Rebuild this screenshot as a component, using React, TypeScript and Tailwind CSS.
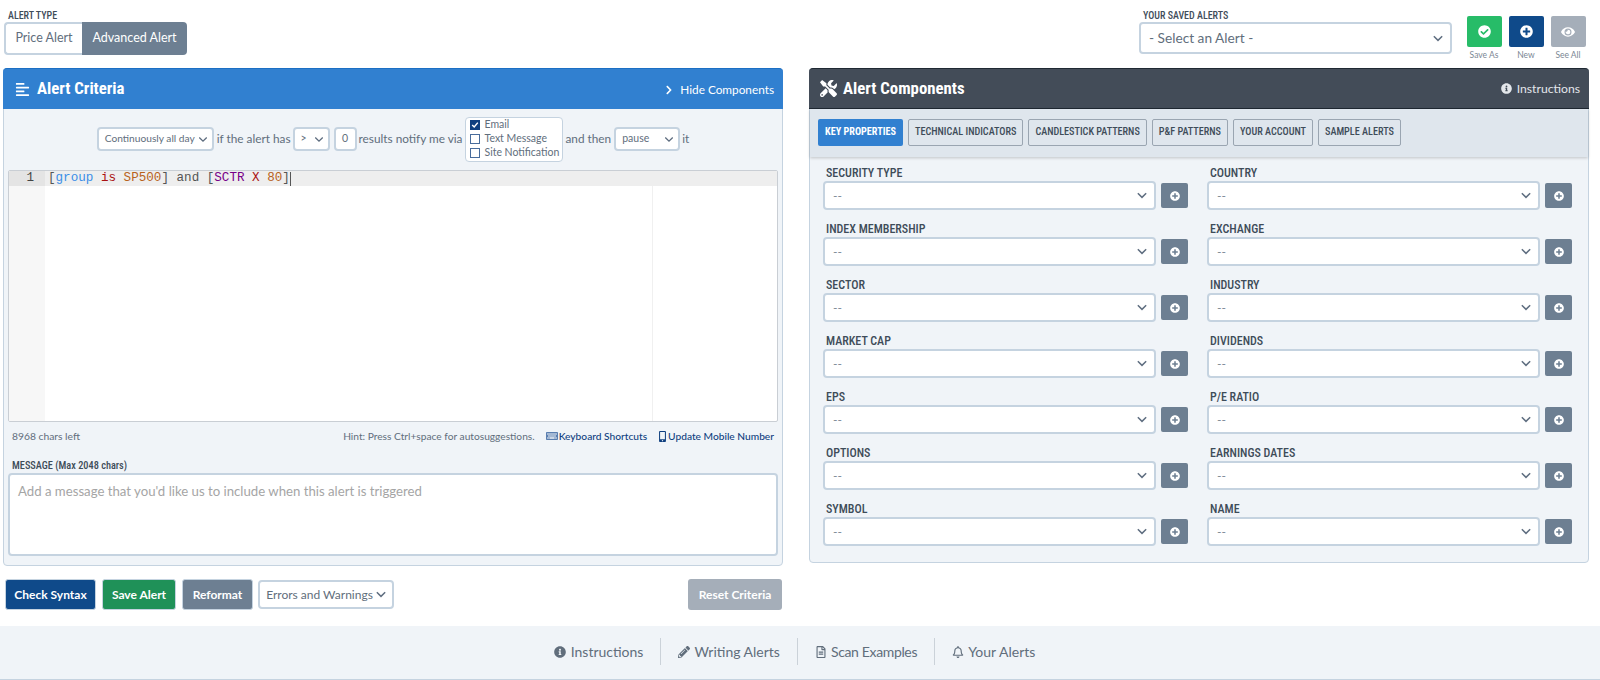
import React from 'react';
import {
  FaAlignLeft,
  FaTools,
  FaInfoCircle,
  FaPlusCircle,
  FaCheckCircle,
  FaEye,
  FaPencilAlt,
  FaRegFileAlt,
  FaRegBell,
  FaKeyboard,
  FaMobileAlt,
  FaChevronRight,
} from 'react-icons/fa';

const lato = '[font-family:Lato,sans-serif]';
const roboto = '[font-family:Roboto,sans-serif] font-stretch-condensed';

const Chevron: React.FC<{ className?: string }> = ({ className = '' }) => (
  <svg viewBox="0 0 12 8" className={`w-[10px] h-[7px] shrink-0 ${className}`} fill="none" stroke="#5f6e80" strokeWidth="1.8">
    <path d="M1 1.2 L6 6.2 L11 1.2" />
  </svg>
);

const fields: [string, string][] = [
  ['SECURITY TYPE', 'COUNTRY'],
  ['INDEX MEMBERSHIP', 'EXCHANGE'],
  ['SECTOR', 'INDUSTRY'],
  ['MARKET CAP', 'DIVIDENDS'],
  ['EPS', 'P/E RATIO'],
  ['OPTIONS', 'EARNINGS DATES'],
  ['SYMBOL', 'NAME'],
];

const tabs = ['TECHNICAL INDICATORS', 'CANDLESTICK PATTERNS', 'P&F PATTERNS', 'YOUR ACCOUNT', 'SAMPLE ALERTS'];

const Field: React.FC<{ label: string }> = ({ label }) => (
  <div className="w-[365px]">
    <div className={`${roboto} pl-[3px] h-[16px] pt-[1px] text-[12px] leading-[16px] font-medium text-[#3e4c59]`}>{label}</div>
    <div className="flex items-center mt-[1px]">
      <div className="w-[334px] h-[29px] bg-white border-2 border-[#c5d3e0] rounded-[4px] flex items-center justify-between pl-[8px] pr-[7px]">
        <span className={`${lato} text-[12px] text-[#7b8794]`}>--</span>
        <Chevron />
      </div>
      <div className="ml-[5px] w-[27px] h-[25px] bg-[#6d7f92] rounded-[2px] flex items-center justify-center">
        <FaPlusCircle className="text-white text-[10px]" />
      </div>
    </div>
  </div>
);

const Checkbox: React.FC<{ label: string; checked?: boolean }> = ({ label, checked }) => (
  <div className="flex items-center h-[14px] gap-[4px]">
    <span className={`w-[10px] h-[10px] flex items-center justify-center border ${checked ? 'bg-[#0f3f7f] border-[#0f3f7f]' : 'bg-white border-[#486c9c]'}`}>
      {checked && (
        <svg viewBox="0 0 10 10" className="w-[8px] h-[8px]" fill="none" stroke="white" strokeWidth="1.8">
          <path d="M1.5 5 L4 7.5 L8.5 2" />
        </svg>
      )}
    </span>
    <span className="text-[10.5px] text-[#616e7c]">{label}</span>
  </div>
);

const SavedButton: React.FC<{ bg: string; label: string; children: React.ReactNode }> = ({ bg, label, children }) => (
  <div className="w-[36px] flex flex-col items-center">
    <div className={`w-[35px] h-[31px] rounded-[2px] flex items-center justify-center ${bg}`}>{children}</div>
    <span className="mt-[3px] text-[8.5px] leading-[10px] text-[#7b8794] whitespace-nowrap">{label}</span>
  </div>
);

const App: React.FC = () => {
  return (
    <div className={`${lato} w-[1600px] h-[680px] bg-white flex flex-col overflow-hidden`}>
      {/* top row */}
      <div className="h-[68px] flex justify-between pl-[4px] pr-[14px]">
        <div className="pt-[10px]">
          <div className={`${roboto} pl-[4px] h-[12px] text-[10px] leading-[12px] font-medium text-[#3e4c59]`}>ALERT TYPE</div>
          <div className="flex h-[33px] text-[12.5px]">
            <div className="w-[78px] bg-white border-2 border-r-0 border-[#c5d3e0] rounded-l-[4px] flex items-center justify-center text-[#616e7c]">Price Alert</div>
            <div className="w-[105px] bg-[#6d7f92] rounded-r-[4px] flex items-center justify-center text-white">Advanced Alert</div>
          </div>
        </div>
        <div className="flex">
          <div className="pt-[10px] w-[313px]">
            <div className={`${roboto} pl-[4px] h-[12px] text-[10px] leading-[12px] font-medium text-[#3e4c59]`}>YOUR SAVED ALERTS</div>
            <div className="h-[32px] bg-white border-2 border-[#c5d3e0] rounded-[4px] flex items-center justify-between pl-[8px] pr-[7px]">
              <span className="text-[13.7px] text-[#616e7c]">- Select an Alert -</span>
              <Chevron />
            </div>
          </div>
          <div className="ml-[14px] pt-[16px] flex gap-[6px]">
            <SavedButton bg="bg-[#27bc68]" label="Save As"><FaCheckCircle className="text-white text-[13px]" /></SavedButton>
            <SavedButton bg="bg-[#0f4a8a]" label="New"><FaPlusCircle className="text-white text-[13px]" /></SavedButton>
            <SavedButton bg="bg-[#a5aeb9]" label="See All"><FaEye className="text-white text-[14px]" /></SavedButton>
          </div>
        </div>
      </div>

      {/* panels */}
      <div className="h-[558px] flex items-start pl-[3px] gap-[26px]">
        <div className="w-[780px] flex flex-col">
          <div className="h-[498px] bg-[#f0f4f8] border border-[#c5d3e0] rounded-[4px] flex flex-col">
            <div className="h-[41px] -mx-px -mt-px bg-[#3180d0] border-t border-[#1b6fc4] rounded-t-[4px] flex items-center justify-between pl-[12px] pr-[9px] text-white">
              <div className="flex items-center gap-[7px]">
                <FaAlignLeft className="text-[15px]" />
                <span className={`${roboto} text-[16.8px] font-bold`}>Alert Criteria</span>
              </div>
              <div className="flex items-center gap-[6px] text-[11.8px] pt-[1px]">
                <FaChevronRight className="text-[10px]" />
                <span>Hide Components</span>
              </div>
            </div>
            <div className="h-[60px] flex items-center justify-center text-[11.8px] text-[#616e7c]">
              <div className="w-[117px] h-[24px] bg-white border-2 border-[#c5d3e0] rounded-[4px] flex items-center justify-between pl-[6px] pr-[4px]">
                <span className="text-[10.2px] whitespace-nowrap">Continuously all day</span>
                <Chevron className="scale-90" />
              </div>
              <span className="ml-[3px] mr-[2px]">if the alert has</span>
              <div className="w-[37px] h-[24px] bg-white border-2 border-[#c5d3e0] rounded-[4px] flex items-center justify-between pl-[6px] pr-[4px]">
                <span className="text-[10.5px]">&gt;</span>
                <Chevron className="scale-90" />
              </div>
              <div className="ml-[4px] w-[23px] h-[24px] bg-white border-2 border-[#c5d3e0] rounded-[4px] flex items-center justify-center text-[10.5px]">0</div>
              <span className="ml-[2px] mr-[3px]">results notify me via</span>
              <div className="w-[98px] h-[45px] bg-white border border-[#c5d3e0] rounded-[4px] flex flex-col justify-center pl-[4px]">
                <Checkbox label="Email" checked />
                <Checkbox label="Text Message" />
                <Checkbox label="Site Notification" />
              </div>
              <span className="ml-[2px] mr-[3px]">and then</span>
              <div className="w-[66px] h-[24px] bg-white border-2 border-[#c5d3e0] rounded-[4px] flex items-center justify-between pl-[6px] pr-[4px]">
                <span className="text-[10.5px]">pause</span>
                <Chevron className="scale-90" />
              </div>
              <span className="ml-[2px]">it</span>
            </div>
            {/* editor */}
            <div className="mt-[1px] mx-[4px] h-[252px] bg-white border border-[#c9ced4] rounded-[2px] flex overflow-hidden relative">
              <div className="w-[36px] bg-[#f7f7f7] shrink-0">
                <div className="h-[15px] bg-[#e4e4e4] text-right pr-[11px] text-[12.6px] leading-[15px] [font-family:'Liberation_Mono',monospace] text-[#444]">1</div>
              </div>
              <div className="flex-1 relative">
                <div className="h-[15px] bg-[#eeeeee] pl-[3px] whitespace-pre text-[12.6px] leading-[15px] [font-family:'Liberation_Mono',monospace] text-[#555] flex items-center">
                  <span>[</span><span className="text-[#3b8fe8]">group</span><span> </span><span className="text-[#a11]">is</span><span> </span><span className="text-[#b8621b]">SP500</span><span>] and [</span><span className="text-[#708]">SCTR</span><span> </span><span className="text-[#a11]">X</span><span> </span><span className="text-[#b8621b]">80</span><span>]</span><span className="w-px h-[14px] bg-[#555]" />
                </div>
                <div className="absolute top-[15px] bottom-0 left-[607px] w-px bg-[#f0f0f0]" />
              </div>
            </div>
            <div className="mx-[4px] h-[29px] flex items-center justify-between text-[10.2px] text-[#616e7c] pl-[4px] pr-[4px]">
              <span className="text-[10.3px]">8968 chars left</span>
              <div className="flex items-center">
                <span>Hint: Press Ctrl+space for autosuggestions.</span>
                <FaKeyboard className="ml-[11px] mr-px text-[12px] text-[#5b7fb0]" />
                <span className="text-[#0f3f7f] font-medium">Keyboard Shortcuts</span>
                <FaMobileAlt className="ml-[10px] text-[11px] text-[#0f3f7f]" />
                <span className="text-[#0f3f7f] font-medium">Update Mobile Number</span>
              </div>
            </div>
            <div className={`${roboto} mx-[4px] mt-[8px] h-[14px] pl-[4px] text-[10.3px] leading-[14px] font-medium text-[#3e4c59]`}>MESSAGE (Max 2048 chars)</div>
            <div className="mx-[4px] h-[83px] bg-white border-2 border-[#c5d3e0] rounded-[4px] pl-[8px] pt-[7px] text-[13.2px] leading-[18px] text-[#a5a5a5]">
              Add a message that you'd like us to include when this alert is triggered
            </div>
          </div>
          <div className="mt-[13px] flex items-center text-[12px] pl-[2px] pr-[1px]">
            <div className="w-[91px] h-[31px] bg-[#0f4a8a] border border-[#c5d3e0] rounded-[3px] flex items-center justify-center text-white font-bold">Check Syntax</div>
            <div className="ml-[6px] w-[74px] h-[31px] bg-[#1f9158] border border-[#c5d3e0] rounded-[3px] flex items-center justify-center text-white font-bold">Save Alert</div>
            <div className="ml-[6px] w-[71px] h-[31px] bg-[#6d7f92] border border-[#c5d3e0] rounded-[3px] flex items-center justify-center text-white font-bold">Reformat</div>
            <div className="ml-[5px] w-[136px] h-[29px] bg-white border-2 border-[#c5d3e0] rounded-[4px] flex items-center justify-center gap-[3px] text-[#616e7c]">
              Errors and Warnings
              <Chevron />
            </div>
            <div className="ml-auto w-[94px] h-[31px] bg-[#a5aeb9] rounded-[3px] flex items-center justify-center text-white font-bold">Reset Criteria</div>
          </div>
        </div>

        <div className="w-[780px] h-[495px] bg-[#f0f4f8] border border-[#c5d3e0] rounded-[4px] flex flex-col">
          <div className="h-[41px] -mx-px -mt-px bg-[#434c58] border-y border-[#1f2933] rounded-t-[4px] flex items-center justify-between pl-[11px] pr-[9px] text-white">
            <div className="flex items-center gap-[6px]">
              <FaTools className="text-[17px]" />
              <span className={`${roboto} text-[16.8px] font-bold`}>Alert Components</span>
            </div>
            <div className="flex items-center gap-[5px] text-[12.2px] text-[#e4e7eb] pt-[1px]">
              <FaInfoCircle className="text-[11px]" />
              <span>Instructions</span>
            </div>
          </div>
          <div className="h-[48px] bg-[#dfe6ed] shadow-[0_1px_3px_rgba(0,0,0,0.2)] flex items-center gap-[5px] pl-[8px] pb-[2px]">
            <div className={`${roboto} h-[27px] px-[7px] bg-[#3180d0] rounded-[2px] flex items-center text-[10.2px] font-bold text-white`}>KEY PROPERTIES</div>
            {tabs.map((tab) => (
              <div key={tab} className={`${roboto} h-[27px] px-[6px] border border-[#9aa5b1] rounded-[2px] flex items-center text-[10.2px] font-medium text-[#3e4c59]`}>{tab}</div>
            ))}
          </div>
          <div className="flex flex-col gap-[10px] pt-[7px] pl-[13px]">
            {fields.map(([a, b]) => (
              <div key={a} className="flex gap-[19px]">
                <Field label={a} />
                <Field label={b} />
              </div>
            ))}
          </div>
        </div>
      </div>

      {/* footer */}
      <div className="flex-1 bg-[#f0f4f8] border-b border-[#c5d3e0] flex items-center justify-center text-[14px] text-[#616e7c] pb-[2px] pr-[11px]">
        <div className="flex items-center gap-[5px] pr-[17px] h-[27px]"><FaInfoCircle className="text-[12px]" />Instructions</div>
        <div className="flex items-center gap-[4px] px-[17px] h-[27px] border-l border-[#cbd2d9]"><FaPencilAlt className="text-[12px]" />Writing Alerts</div>
        <div className="flex items-center gap-[4px] px-[17px] h-[27px] border-l border-[#cbd2d9] tracking-[-0.35px]"><FaRegFileAlt className="text-[12px]" />Scan Examples</div>
        <div className="flex items-center gap-[4px] pl-[17px] h-[27px] border-l border-[#cbd2d9]"><FaRegBell className="text-[12px]" />Your Alerts</div>
      </div>
    </div>
  );
};

export default App;
